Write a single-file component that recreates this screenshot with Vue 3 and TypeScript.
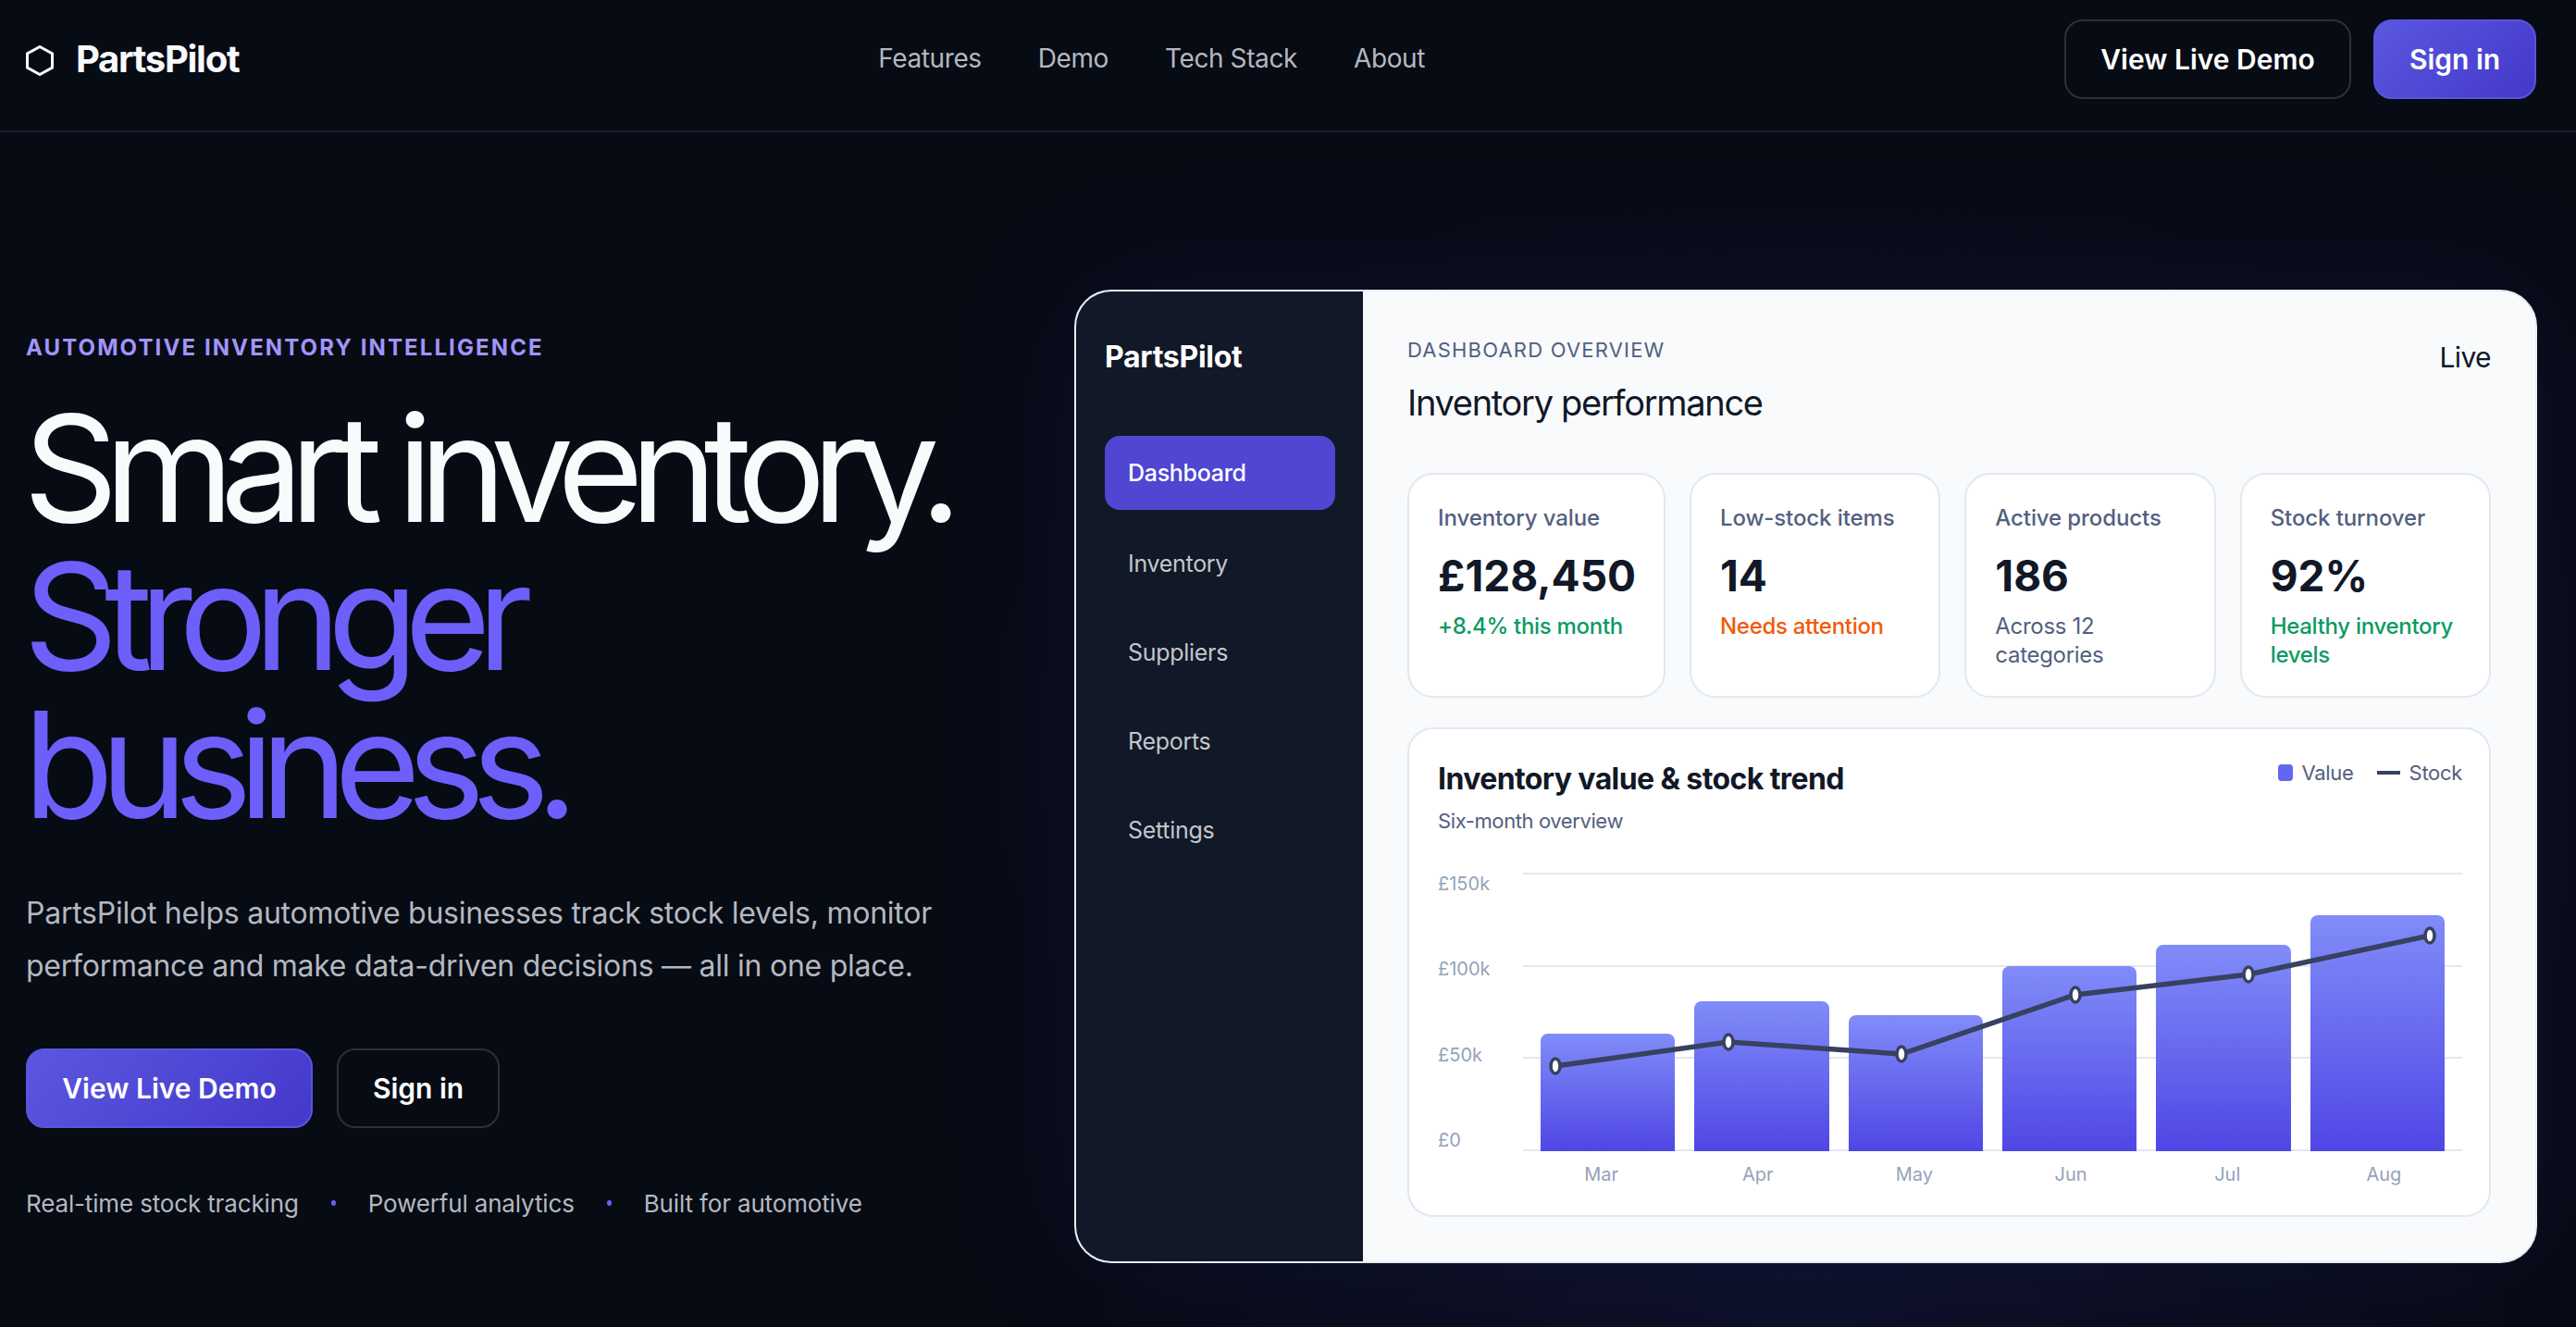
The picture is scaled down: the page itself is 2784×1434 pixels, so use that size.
<script setup lang="ts">
const links: string[] = ['Features', 'Demo', 'Tech Stack', 'About']
const side: string[] = ['Dashboard', 'Inventory', 'Suppliers', 'Reports', 'Settings']
const stats = [
  { label: 'Inventory value', value: '£128,450', sub: '+8.4% this month', tone: 'good' },
  { label: 'Low-stock items', value: '14', sub: 'Needs attention', tone: 'warn' },
  { label: 'Active products', value: '186', sub: 'Across 12 categories', tone: 'mute' },
  { label: 'Stock turnover', value: '92%', sub: 'Healthy inventory levels', tone: 'good' },
]
const yAxis: string[] = ['£150k', '£100k', '£50k', '£0']
const bars = [127, 162, 147, 200, 223, 255].map((h) => (h / 301) * 100)
const months: string[] = ['Mar', 'Apr', 'May', 'Jun', 'Jul', 'Aug']
const pts: [number, number][] = [[35, 209], [222, 183], [409, 196], [597, 132], [784, 110], [980, 68]]
const linePts = pts.map((p) => p.join(',')).join(' ')
</script>

<template>
  <div class="page">
    <header class="top">
      <div class="brand">
        <svg class="hex" viewBox="2 1 20 22" fill="none" stroke="currentColor" stroke-width="2" stroke-linejoin="miter">
          <polygon points="12,2 21,7 21,17 12,22 3,17 3,7" />
        </svg>
        <span>PartsPilot</span>
      </div>
      <nav class="links">
        <a v-for="l in links" :key="l">{{ l }}</a>
      </nav>
      <div class="actions">
        <button class="btn ghost wide">View Live Demo</button>
        <button class="btn solid narrow">Sign in</button>
      </div>
    </header>

    <main class="hero">
      <section class="copy">
        <p class="eyebrow">AUTOMOTIVE INVENTORY INTELLIGENCE</p>
        <h1>Smart inventory.<br /><span>Stronger<br />business.</span></h1>
        <p class="lead">PartsPilot helps automotive businesses track stock levels, monitor performance and make data-driven decisions — all in one place.</p>
        <div class="cta">
          <button class="btn solid wide">View Live Demo</button>
          <button class="btn ghost narrow">Sign in</button>
        </div>
        <ul class="points">
          <li>Real-time stock tracking</li>
          <li class="dot"></li>
          <li>Powerful analytics</li>
          <li class="dot"></li>
          <li>Built for automotive</li>
        </ul>
      </section>

      <section class="mock">
        <aside class="side">
          <div class="side-brand">PartsPilot</div>
          <div v-for="(s, i) in side" :key="s" class="side-item" :class="{ active: i === 0 }">{{ s }}</div>
        </aside>
        <div class="panel">
          <div class="panel-head">
            <div>
              <div class="over">DASHBOARD OVERVIEW</div>
              <div class="perf">Inventory performance</div>
            </div>
            <div class="live">Live</div>
          </div>
          <div class="stats">
            <div v-for="s in stats" :key="s.label" class="stat">
              <div class="stat-label">{{ s.label }}</div>
              <div class="stat-value">{{ s.value }}</div>
              <div class="stat-sub" :class="s.tone">{{ s.sub }}</div>
            </div>
          </div>
          <div class="chart">
            <div class="chart-head">
              <div>
                <div class="chart-title">Inventory value &amp; stock trend</div>
                <div class="chart-sub">Six-month overview</div>
              </div>
              <div class="legend">
                <i class="sw"></i><span>Value</span>
                <i class="ln"></i><span>Stock</span>
              </div>
            </div>
            <div class="plot-wrap">
              <div class="y">
                <span v-for="y in yAxis" :key="y">{{ y }}</span>
              </div>
              <div class="plot">
                <div class="grid"><i></i><i></i><i></i><i></i></div>
                <div class="bars">
                  <div v-for="(b, i) in bars" :key="i" class="bar" :style="{ height: b + '%' }"></div>
                </div>
                <svg class="trend" viewBox="0 0 1015 301">
                  <polyline :points="linePts" fill="none" stroke="#374160" stroke-width="5.5" />
                  <ellipse v-for="(p, i) in pts" :key="i" :cx="p[0]" :cy="p[1]" rx="5" ry="8" fill="#fff" stroke="#374160" stroke-width="3.5" />
                </svg>
              </div>
              <div class="x">
                <span v-for="m in months" :key="m">{{ m }}</span>
              </div>
            </div>
          </div>
        </div>
      </section>
    </main>
  </div>
</template>

<style>
html, body { margin: 0; background: #070b14; }
</style>

<style scoped>
* { box-sizing: border-box; }
.page {
  width: 2784px;
  height: 1434px;
  overflow: hidden;
  font-family: Inter, "Noto Sans", sans-serif;
  color: #f8fafc;
  background:
    radial-gradient(1100px 500px at 1950px 1434px, rgba(67, 56, 202, 0.1), transparent 70%),
    radial-gradient(1300px 900px at 1950px 800px, rgba(67, 56, 202, 0.06), transparent 70%),
    #070b14;
}
.top {
  height: 143px;
  border-bottom: 2px solid #1b1f2e;
  padding: 0 43px 14px 28px;
  display: flex;
  align-items: center;
  justify-content: space-between;
}
.brand { display: flex; align-items: center; gap: 24px; font-size: 40px; font-weight: 700; letter-spacing: -1.3px; }
.hex { width: 30px; height: 33px; margin-top: 4px; color: #f8fafc; }
.links { display: flex; gap: 61px; font-size: 28px; letter-spacing: -0.4px; color: #b4b8c0; margin-top: -2px; }
.actions { display: flex; gap: 24px; }
.btn {
  font-family: inherit;
  font-size: 30px;
  font-weight: 600;
  color: #fff;
  height: 86px;
  border-radius: 20px;
  border: 2px solid transparent;
  padding: 0;
}
.wide { width: 310px; }
.narrow { width: 176px; }
.ghost { background: transparent; border-color: #2d303b; }
.solid { background: linear-gradient(135deg, #5b57e0, #4338ca); border-color: #5a55de; }

.hero {
  display: grid;
  grid-template-columns: 1fr 1581px;
  align-items: center;
  padding: 170px 42px 0 28px;
}
.copy { min-width: 0; }
.eyebrow { margin: -2px 0 0; font-size: 24px; line-height: 30px; font-weight: 700; letter-spacing: 2.1px; color: #a294f9; }
h1 {
  margin: 35px 0 0 -3px;
  font-size: 160px;
  line-height: 160px;
  font-weight: 400;
  letter-spacing: -14.8px;
  color: #f8fafc;
}
h1 span { color: #6c5ffa; }
.lead { margin: 52px 0 0; max-width: 1040px; font-size: 32px; line-height: 57px; letter-spacing: -0.25px; color: #b4b8c0; }
.cta { display: flex; gap: 26px; margin-top: 61px; }
.points { list-style: none; margin: 66px 0 0; padding: 0; display: flex; align-items: center; gap: 35px; font-size: 26px; letter-spacing: -0.15px; color: #b4b8c0; }
.dot { width: 5px; height: 6px; border-radius: 50%; background: #6366f1; }

.mock {
  height: 1052px;
  border: 2px solid #e8ebf1;
  border-radius: 40px;
  overflow: hidden;
  display: flex;
  background: #f8fafc;
  box-shadow: 0 0 160px rgba(79, 70, 229, 0.1);
}
.side { width: 310px; flex: none; background: #111827; padding: 51px 30px 0 31px; }
.side-brand { font-size: 32px; line-height: 40px; font-weight: 700; color: #fff; letter-spacing: -0.3px; margin-bottom: 65px; }
.side-item { height: 80px; margin-bottom: 16px; padding: 0 25px; border-radius: 16px; display: flex; align-items: center; font-size: 25px; letter-spacing: -0.3px; color: #c3c6cc; }
.side-item.active { background: #4f46d1; color: #fff; font-weight: 500; margin-bottom: 18px; }

.panel { flex: 1; min-width: 0; padding: 48px; color: #111827; }
.panel-head { display: flex; justify-content: space-between; align-items: flex-start; height: 148px; }
.over { font-size: 22px; line-height: 30px; letter-spacing: 1.2px; color: #52607f; }
.perf { margin-top: 17px; font-size: 38px; line-height: 50px; font-weight: 400; letter-spacing: -1.3px; color: #111827; }
.live { font-size: 30px; line-height: 38px; letter-spacing: -0.6px; color: #111827; margin-top: 4px; }

.stats { display: grid; grid-template-columns: 279px repeat(3, 1fr); gap: 26px; }
.stat { height: 243px; background: #fff; border: 2px solid #e2e8f0; border-radius: 28px; padding: 31px 31px; }
.stat-label { font-size: 24px; line-height: 32px; font-weight: 500; letter-spacing: -0.1px; color: #52607f; }
.stat-value { margin-top: 18px; font-size: 46px; line-height: 56px; font-weight: 700; color: #111827; }
.stat-sub { margin-top: 11px; font-size: 24px; line-height: 31px; font-weight: 500; letter-spacing: -0.3px; }
.good { color: #0b9a62; }
.warn { color: #f15a0a; }
.mute { color: #52607f; font-weight: 400; }

.chart { margin-top: 32px; height: 529px; background: #fff; border: 2px solid #e2e8f0; border-radius: 28px; padding: 30px 29px 0 31px; }
.chart-head { display: flex; justify-content: space-between; align-items: flex-start; height: 125px; }
.chart-title { margin-top: 3px; font-size: 32px; line-height: 42px; font-weight: 700; letter-spacing: -0.6px; color: #111827; }
.chart-sub { margin-top: 9px; font-size: 22px; line-height: 30px; letter-spacing: -0.4px; color: #52607f; }
.legend { display: flex; align-items: center; font-size: 22px; line-height: 30px; letter-spacing: -0.3px; color: #52607f; margin-top: 2px; }
.sw { width: 16px; height: 18px; border-radius: 4px; background: #6366f1; margin-right: 9px; }
.ln { width: 25px; height: 4px; background: #374160; margin: 0 10px 0 25px; }

.plot-wrap { display: grid; grid-template-columns: 92px 1fr; grid-template-rows: 301px auto; }
.y { display: flex; flex-direction: column; justify-content: space-between; font-size: 20px; line-height: 24px; color: #94a3b8; }
.plot { position: relative; }
.grid { position: absolute; inset: 0; display: flex; flex-direction: column; justify-content: space-between; }
.grid i { display: block; height: 2px; background: #e2e8f0; }
.bars { position: absolute; inset: 0; display: flex; align-items: flex-end; gap: 21px; padding: 0 19px; }
.bar { flex: 1; border-radius: 8px 8px 0 0; background: linear-gradient(180deg, #818cf8, #4f46e5); }
.trend { position: absolute; inset: 0; width: 100%; height: 100%; overflow: visible; }
.x { grid-column: 2; display: grid; grid-template-columns: repeat(6, 1fr); text-align: center; font-size: 20px; line-height: 24px; color: #94a3b8; padding-top: 13px; }
</style>
